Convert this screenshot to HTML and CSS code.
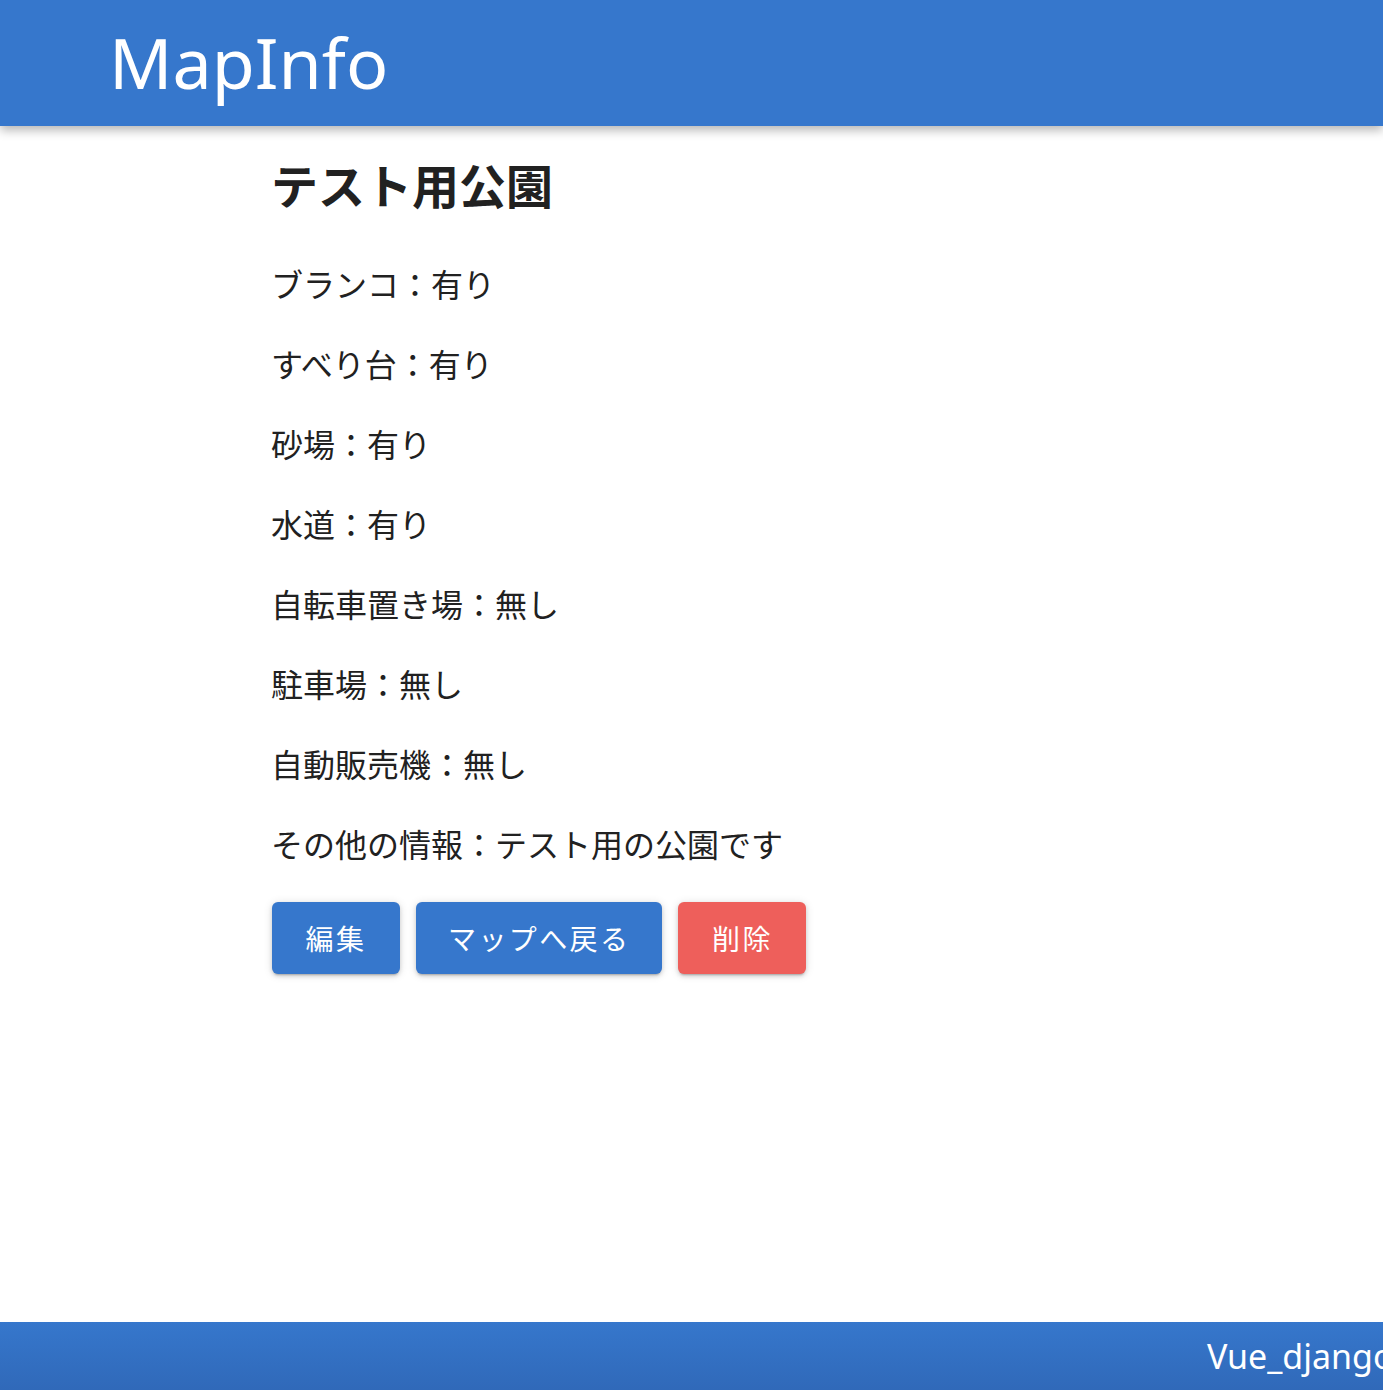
FILE: index.html
```html
<!DOCTYPE html>
<html lang="ja">
<head>
<meta charset="utf-8">
<title>MapInfo</title>
<link rel="stylesheet" href="styles.css">
</head>
<body>
<div class="app">
  <header class="app-bar">
    <div class="app-title">MapInfo</div>
  </header>
  <main class="content">
    <h2 class="park-name">テスト用公園</h2>
    <p class="item">ブランコ：有り</p>
    <p class="item">すべり台：有り</p>
    <p class="item">砂場：有り</p>
    <p class="item">水道：有り</p>
    <p class="item">自転車置き場：無し</p>
    <p class="item">駐車場：無し</p>
    <p class="item">自動販売機：無し</p>
    <p class="item">その他の情報：テスト用の公園です</p>
    <div class="actions">
      <button class="btn btn-primary">編集</button>
      <button class="btn btn-primary">マップへ戻る</button>
      <button class="btn btn-danger">削除</button>
    </div>
  </main>
  <footer class="app-footer">
    <span class="footer-text">Vue_django</span>
  </footer>
</div>
</body>
</html>
```

FILE: styles.css
```css
html, body {
  margin: 0;
  padding: 0;
  height: 100%;
}
body {
  font-family: "Noto Sans", "Noto Sans CJK JP", sans-serif;
  color: #212121;
  background: #fff;
  overflow: hidden;
}
.app {
  display: flex;
  flex-direction: column;
  min-height: 100vh;
}
.app-bar {
  height: 126px;
  background: #3677cc;
  display: flex;
  align-items: center;
  padding-left: 109px;
  box-shadow: 0 4px 10px rgba(0, 0, 0, 0.3);
  position: relative;
  z-index: 1;
  flex-shrink: 0;
}
.app-title {
  color: #fff;
  font-family: "Noto Sans", sans-serif;
  font-size: 70px;
  font-weight: 400;
  line-height: 1;
  margin-top: -3px;
}
.content {
  padding: 22px 0 0 271px;
  flex: 1;
}
.park-name {
  font-family: "Noto Sans CJK JP", sans-serif;
  font-size: 47px;
  font-weight: 700;
  line-height: 72px;
  margin: 0 0 39px 0;
}
.item {
  font-family: "Noto Sans CJK JP", sans-serif;
  font-size: 32px;
  line-height: 48px;
  margin: 0 0 32px 0;
  font-weight: 400;
}
.actions {
  display: flex;
  gap: 16px;
  margin-top: 35px;
  margin-left: 1px;
}
.btn {
  height: 72px;
  min-width: 128px;
  padding: 0 32px;
  border: none;
  border-radius: 6px;
  color: #fff;
  font-family: "Noto Sans CJK JP", sans-serif;
  font-size: 28px;
  letter-spacing: 2.4px;
  box-shadow: 0 3px 2px -2px rgba(0,0,0,.2), 0 2px 4px 0 rgba(0,0,0,.14), 0 1px 10px 0 rgba(0,0,0,.12);
}
.btn-primary {
  background: #3677cc;
}
.btn-danger {
  background: #ee5f5b;
}
.app-footer {
  height: 68px;
  background: linear-gradient(180deg, #3677cc 0%, #3069b9 100%);
  display: flex;
  align-items: center;
  padding-left: 1207px;
  overflow: hidden;
  white-space: nowrap;
  flex-shrink: 0;
}
.footer-text {
  color: #fff;
  font-family: "Noto Sans", sans-serif;
  font-size: 34px;
  line-height: 1;
}
```
